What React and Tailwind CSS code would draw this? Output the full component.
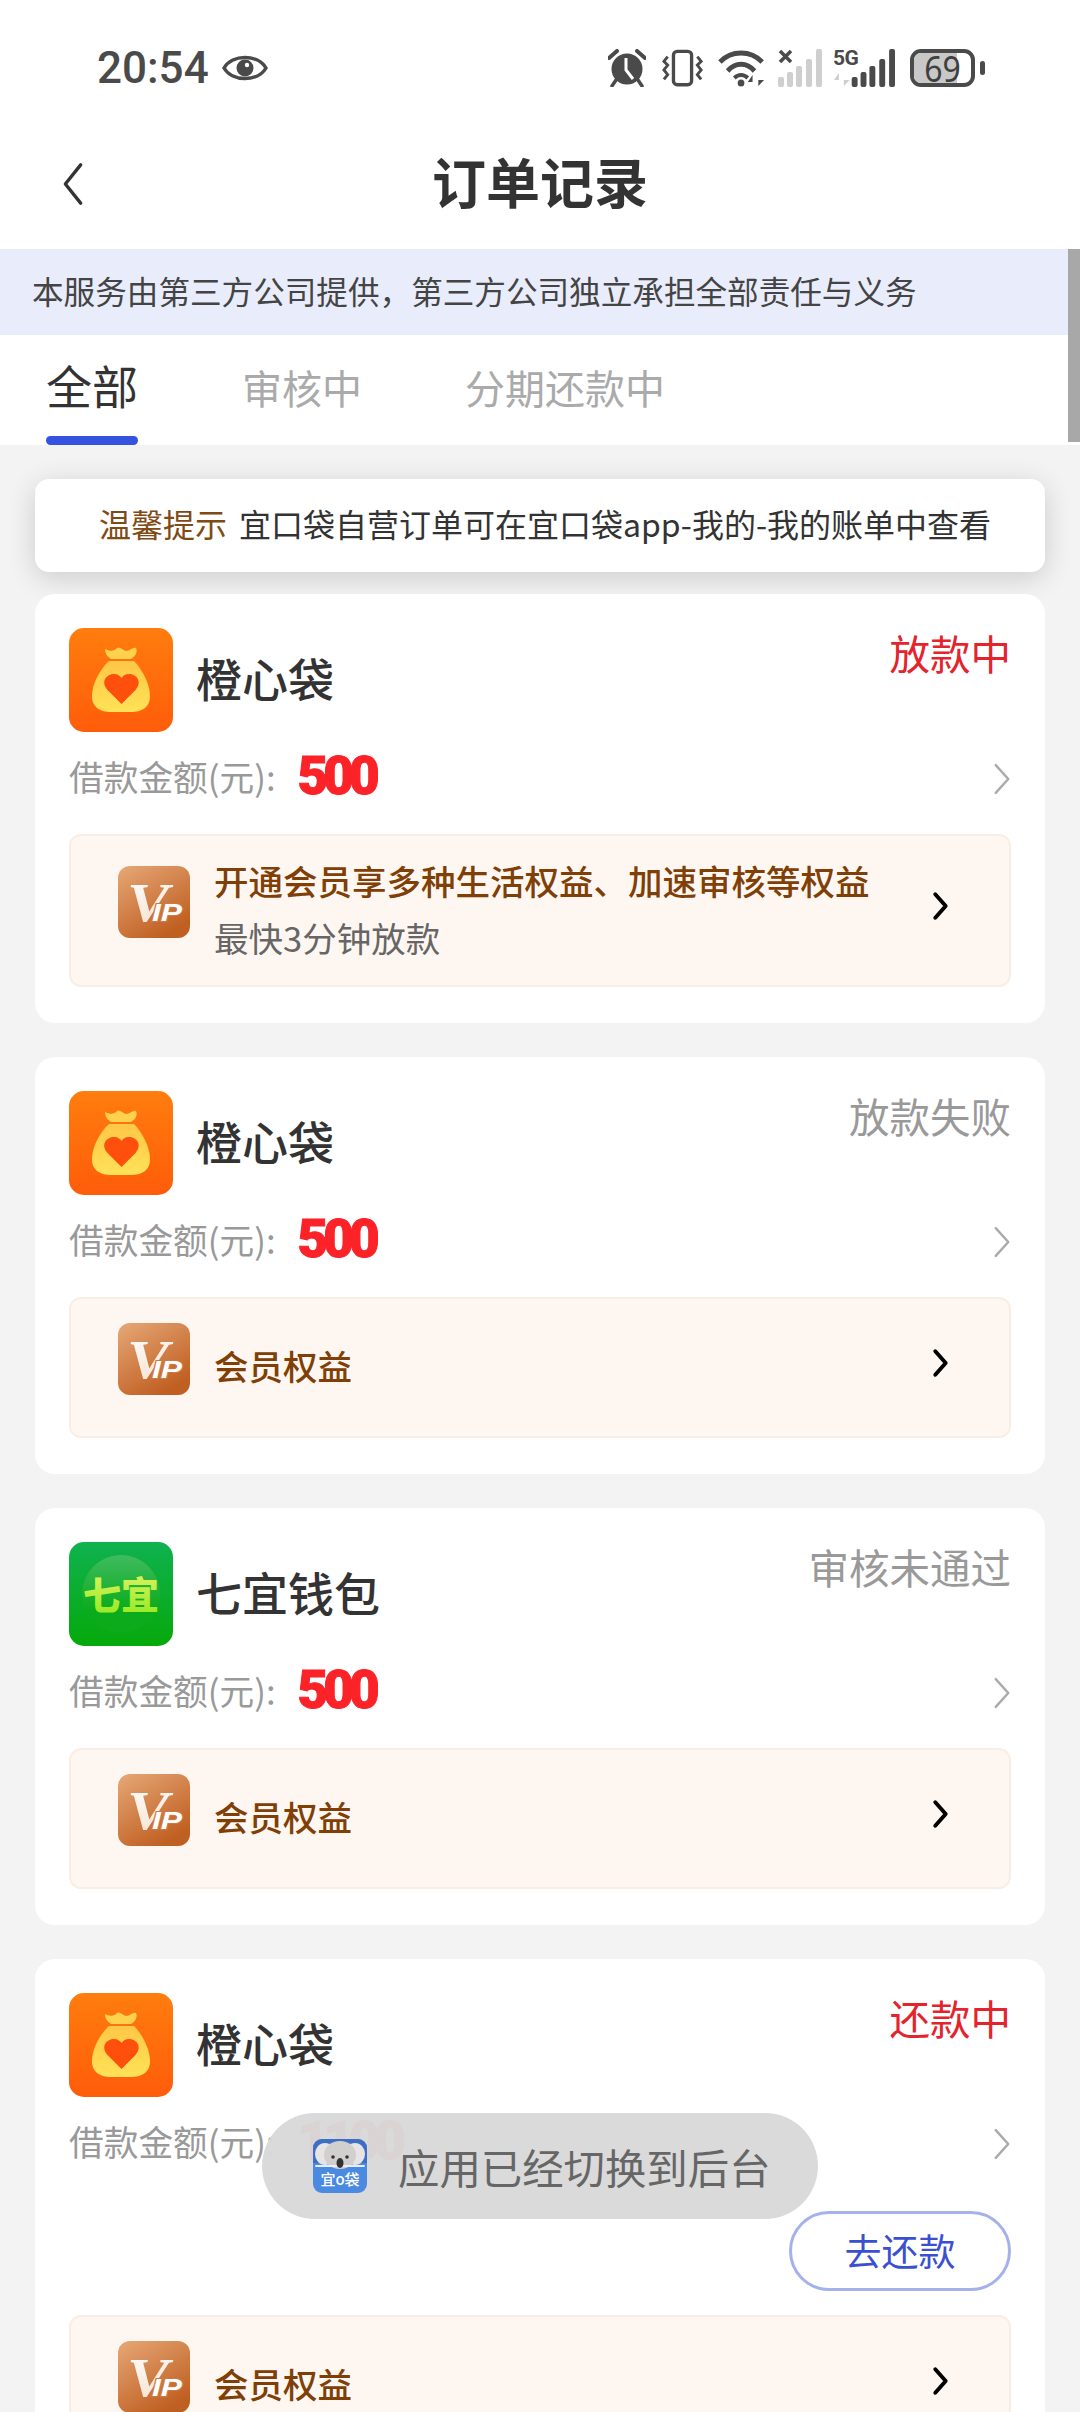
import React from "react";

const Chevron = ({ className, stroke = "#333", w = 3, d = "M20 3 L4 23 L20 43" }) => (
  <svg viewBox="0 0 24 46" className={className} fill="none">
    <path d={d} stroke={stroke} strokeWidth={w} strokeLinecap="round" strokeLinejoin="round" />
  </svg>
);

const BagLogo = () => (
  <svg viewBox="0 0 104 104" className="w-[104px] h-[104px] shrink-0">
    <defs>
      <linearGradient id="bagbg" x1="0" y1="0" x2="0" y2="1">
        <stop offset="0" stopColor="#ff7d0e" />
        <stop offset="1" stopColor="#ff5c0a" />
      </linearGradient>
      <linearGradient id="bagf" x1="0" y1="0" x2="0" y2="1">
        <stop offset="0" stopColor="#ffc745" />
        <stop offset="1" stopColor="#ffe257" />
      </linearGradient>
    </defs>
    <rect width="104" height="104" rx="15" fill="url(#bagbg)" />
    <path d="M36 21 C42 24 45 23 48 20 C50 18 54 22 57 23 C61 23 64 19 67 20 C69 24 66 29 62 31 H42 C39 29 36 26 36 21Z" fill="#ffd24e" />
    <path d="M40 33 H65 C73 41 81 56 81 68 C81 80 72 84 62 84 H42 C32 84 23 80 23 68 C23 56 31 41 40 33Z" fill="url(#bagf)" />
    <path d="M52.5 76 L38.5 62 C31 53 38 46 45 46 C49 46 51 48 52.5 50 C54 48 56 46 60 46 C67 46 74 53 66.5 62 Z" fill="#ff4f0c" />
  </svg>
);

const QiyiLogo = () => (
  <svg viewBox="0 0 104 104" className="w-[104px] h-[104px] shrink-0">
    <defs>
      <linearGradient id="qbg" x1="0" y1="0" x2="0" y2="1">
        <stop offset="0" stopColor="#0fb24f" />
        <stop offset="1" stopColor="#06a90a" />
      </linearGradient>
      <linearGradient id="qglow" x1="0" y1="0" x2="0" y2="1">
        <stop offset="0" stopColor="#3fbb60" />
        <stop offset="0.7" stopColor="#0cab1c" />
      </linearGradient>
      <linearGradient id="qt" x1="0" y1="0" x2="0" y2="1">
        <stop offset="0" stopColor="#e6f56a" />
        <stop offset="1" stopColor="#8fe81c" />
      </linearGradient>
    </defs>
    <rect width="104" height="104" rx="15" fill="url(#qbg)" />
    <circle cx="52" cy="52" r="39" fill="url(#qglow)" />
    <text x="52" y="67" textAnchor="middle" fontSize="38" fontWeight="900" fill="url(#qt)" fontFamily="'Noto Sans CJK SC',sans-serif">七宜</text>
  </svg>
);

const VipLogo = () => (
  <svg viewBox="0 0 72 72" className="w-[72px] h-[72px] shrink-0 mb-[17px]">
    <defs>
      <linearGradient id="vbg" x1="0" y1="0" x2="0.6" y2="1">
        <stop offset="0" stopColor="#e6a877" />
        <stop offset="1" stopColor="#c05f22" />
      </linearGradient>
      <linearGradient id="vt" x1="0" y1="0" x2="0.3" y2="1">
        <stop offset="0" stopColor="#ffffff" />
        <stop offset="1" stopColor="#f6e2d0" />
      </linearGradient>
    </defs>
    <rect width="72" height="72" rx="12" fill="url(#vbg)" />
    <text x="9" y="55" fontSize="54" fontWeight="900" fontStyle="italic" fill="url(#vt)" fontFamily="'Liberation Serif',serif" textLength="42" lengthAdjust="spacingAndGlyphs">V</text>
    <text x="34" y="55" fontSize="23" fontWeight="700" fontStyle="italic" fill="#fff" stroke="#cf7a40" strokeWidth="2" paintOrder="stroke" fontFamily="'Liberation Sans',sans-serif" textLength="30" lengthAdjust="spacingAndGlyphs">IP</text>
  </svg>
);

const KoalaLogo = () => (
  <svg viewBox="0 0 54 54" className="w-[54px] h-[54px] shrink-0">
    <rect width="54" height="54" rx="9" fill="#4a8ae0" />
    <path d="M0 9 a9 9 0 0 1 9 -9 H45 a9 9 0 0 1 9 9 V24 H0Z" fill="#3f6fc4" />
    <ellipse cx="12" cy="15" rx="10" ry="11" fill="#e6e4e4" />
    <ellipse cx="42" cy="15" rx="10" ry="11" fill="#e6e4e4" />
    <ellipse cx="27" cy="16" rx="16" ry="14" fill="#d2cfcf" />
    <rect x="2" y="26" width="50" height="2" rx="1" fill="#e8eef8" />
    <circle cx="20" cy="18" r="1.8" fill="#333" />
    <circle cx="34" cy="18" r="1.8" fill="#333" />
    <ellipse cx="27" cy="24" rx="3.5" ry="5" fill="#333" />
    <text x="27" y="46" textAnchor="middle" fontSize="15" fill="#fff" fontWeight="500" fontFamily="'Noto Sans CJK SC',sans-serif">宜o袋</text>
  </svg>
);

const StatusIcons = () => (
  <div className="flex items-center ml-auto h-[40px] text-[#4a4a4a]">
    <svg viewBox="0 0 38 38" className="w-[38px] h-[38px]">
      <path d="M1 9 L9 2 M37 9 L29 2" stroke="#4a4a4a" strokeWidth="4" strokeLinecap="round" />
      <path d="M8 31 L4 37 M30 31 L34 37" stroke="#4a4a4a" strokeWidth="3.5" strokeLinecap="round" />
      <circle cx="19" cy="20" r="15.5" fill="#4a4a4a" />
      <path d="M18 9 V21 L25 30" stroke="#fff" strokeWidth="3" fill="none" />
    </svg>
    <svg viewBox="0 0 44 38" className="w-[42px] h-[38px] ml-[16px]">
      <rect x="12" y="1.5" width="19" height="35" rx="4" fill="none" stroke="#4a4a4a" strokeWidth="3.5" />
      <path d="M6 7 L2 12 L6 16 L2 21 L6 26 L2 31 M37 7 L41 12 L37 16 L41 21 L37 26 L41 31" fill="none" stroke="#4a4a4a" strokeWidth="3" />
    </svg>
    <svg viewBox="0 0 50 38" preserveAspectRatio="none" className="w-[48px] h-[38px] ml-[14px]">
      <path d="M2 13 C14 1 34 1 46 13" fill="none" stroke="#4a4a4a" strokeWidth="5" />
      <path d="M10 22 C18 13 30 13 38 22" fill="none" stroke="#4a4a4a" strokeWidth="5" />
      <path d="M17 29 C21 25 27 25 31 29" fill="none" stroke="#4a4a4a" strokeWidth="4" />
      <circle cx="24" cy="34" r="3.5" fill="#4a4a4a" />
      <path d="M36 26 L31 33 H36 V38 Z M42 25 V37 L48 31 H42Z" fill="#4a4a4a" />
    </svg>
    <svg viewBox="0 0 44 38" className="w-[44px] h-[38px] ml-[12px]">
      <path d="M2 2 L13 13 M13 2 L2 13" stroke="#4a4a4a" strokeWidth="3.5" />
      <g fill="#cfcfcf">
        <rect x="0" y="28" width="6" height="10" rx="2" />
        <rect x="9" y="23" width="6" height="15" rx="2" />
        <rect x="18" y="17" width="6" height="21" rx="2" />
        <rect x="28" y="10" width="6" height="28" rx="2" />
        <rect x="38" y="0" width="6" height="38" rx="2" />
      </g>
    </svg>
    <div className="relative w-[62px] h-[38px] ml-[11px]">
      <span className="absolute left-0 top-[-2px] text-[21px] leading-[22px] font-bold font-['Roboto',sans-serif] text-[#4a4a4a] tracking-[-0.5px]">5G</span>
      <svg viewBox="0 0 63 38" preserveAspectRatio="none" className="w-[62px] h-[38px]">
        <path d="M6 24 L1 31 H6 V38 Z M11 23 V37 L17 31 H11Z" fill="#cfcfcf" />
        <g fill="#4a4a4a">
          <rect x="19" y="28" width="6" height="10" rx="2" />
          <rect x="28" y="23" width="6" height="15" rx="2" />
          <rect x="37" y="17" width="6" height="21" rx="2" />
          <rect x="47" y="10" width="6" height="28" rx="2" />
          <rect x="57" y="0" width="6" height="38" rx="2" />
        </g>
      </svg>
    </div>
    <div className="relative w-[65px] h-[38px] ml-[15px] rounded-[11px] border-[4px] border-[#4a4a4a] flex items-center justify-center">
      <div className="absolute left-0 top-0 bottom-0 w-[43px] rounded-l-[7px] bg-[#c8c8c8]" />
      <span className="relative text-[32px] leading-[30px] font-['Noto_Sans',sans-serif] text-[#3f3f3f] scale-y-[1.15]">69</span>
    </div>
    <div className="w-[5px] h-[14px] ml-[5px] rounded-full bg-[#4a4a4a]" />
  </div>
);

const Card = ({ logo, name, status, statusColor, amount, action, children }) => (
  <div className="bg-white rounded-[20px] px-[34px] pt-[34px] pb-[36px]">
    <div className="flex justify-between items-start">
      <div className="flex items-center gap-[23px]">
        {logo}
        <span className="text-[46px] leading-[60px] -mt-[7px] text-[#333] font-medium">{name}</span>
      </div>
      <span className={`text-[40.5px] leading-[52px] -mt-[1px] ${statusColor}`}>{status}</span>
    </div>
    <div className="flex items-center justify-between h-[94px] mb-[8px]">
      <div className="flex items-center">
        <span className="text-[34.7px] -mt-[5px] text-[#999]">借款金额(元):</span>
        <span className="ml-[22px] -mt-[6px] text-[53px] leading-[60px] font-black text-[#fb2228] font-['Roboto',sans-serif] tracking-[-5px] [-webkit-text-stroke:1px_#fb2228]">{amount}</span>
      </div>
      <Chevron className="w-[18px] h-[32px]" stroke="#aaa" w={3.5} d="M3 3 L21 23 L3 43" />
    </div>
    {action}
    {children}
  </div>
);

const VipBox = ({ title, sub }) => (
  <div className={`flex items-center justify-between bg-[#fef7f1] border-2 border-[#f9eee5] rounded-[12px] pl-[47px] pr-[60px] ${sub ? "h-[153px]" : "h-[141px]"}`}>
    <div className="flex items-center gap-[24px]">
      <VipLogo />
      <div className="flex flex-col -mt-[4px]">
        <span className="text-[34.5px] leading-[57px] font-medium text-[#7f3f07]">{title}</span>
        {sub && <span className="text-[34.5px] leading-[57px] text-[#666]">{sub}</span>}
      </div>
    </div>
    <Chevron className="w-[17px] h-[30px] mb-[10px]" stroke="#000" w={6} d="M4 5 L20 23 L4 41" />
  </div>
);

export default function App() {
  return (
    <div className="relative w-[1080px] h-[2412px] overflow-hidden bg-[#f3f3f3] font-['Noto_Sans_CJK_SC','Noto_Sans',sans-serif]">
      <div className="bg-white pb-[17px]">
        <div className="flex items-center h-[136px] pl-[97px] pr-[95px]">
          <span className="text-[44px] leading-[50px] font-medium text-[#4a4a4a] font-['Roboto',sans-serif]">20:54</span>
          <svg viewBox="0 0 46 28" className="w-[46px] h-[28px] ml-[13px]">
            <path d="M2 14 C10 0 36 0 44 14 C36 28 10 28 2 14Z" fill="none" stroke="#4a4a4a" strokeWidth="3.5" />
            <circle cx="23" cy="14" r="8.5" fill="#4a4a4a" />
            <circle cx="25" cy="11" r="2.2" fill="#fff" />
          </svg>
          <StatusIcons />
        </div>
        <div className="relative flex items-center justify-center h-[96px]">
          <Chevron className="absolute left-[60px] top-[26px] w-[26px] h-[44px]" stroke="#333" w={3.5} />
          <span className="text-[54px] leading-[70px] -mt-[6px] font-bold text-[#333]">订单记录</span>
        </div>
      </div>
      <div className="flex items-center h-[86px] bg-[#e9edfb] pl-[32px] text-[31.6px] text-[#444]">
        <span className="-mt-[2px]">本服务由第三方公司提供，第三方公司独立承担全部责任与义务</span>
      </div>
      <div className="relative flex items-start h-[110px] bg-white">
        <div className="relative ml-[46px] w-[92px] h-[110px]">
          <span className="block text-[46px] leading-[60px] mt-[19px] text-[#333]">全部</span>
          <div className="absolute left-0 bottom-0 w-[92px] h-[9px] rounded-full bg-[#3552e0]" />
        </div>
        <span className="ml-[104px] mt-[22px] text-[40px] leading-[60px] text-[#aaa]">审核中</span>
        <span className="ml-[103px] mt-[22px] text-[40px] leading-[60px] text-[#aaa]">分期还款中</span>
      </div>

      <div className="px-[35px] pt-[34px]">
        <div className="flex items-center justify-center h-[93px] pl-[10px] bg-white rounded-[14px] shadow-[0_6px_28px_rgba(0,0,0,0.16)] text-[32px]">
          <span className="text-[#7f4a14] mr-[12px] -mt-[5px]">温馨提示</span>
          <span className="text-[#333] -mt-[5px]">宜口袋自营订单可在宜口袋app-我的-我的账单中查看</span>
        </div>
        <div className="flex flex-col gap-[34px] mt-[22px]">
          <Card logo={<BagLogo />} name="橙心袋" status="放款中" statusColor="text-[#e4242c]" amount="500">
            <VipBox title="开通会员享多种生活权益、加速审核等权益" sub="最快3分钟放款" />
          </Card>
          <Card logo={<BagLogo />} name="橙心袋" status="放款失败" statusColor="text-[#999]" amount="500">
            <VipBox title="会员权益" />
          </Card>
          <Card logo={<QiyiLogo />} name="七宜钱包" status="审核未通过" statusColor="text-[#999]" amount="500">
            <VipBox title="会员权益" />
          </Card>
          <Card
            logo={<BagLogo />}
            name="橙心袋"
            status="还款中"
            statusColor="text-[#e4242c]"
            amount="1100"
            action={
              <div className="flex justify-end mt-[20px] mb-[24px]">
                <div className="flex items-center justify-center w-[222px] h-[80px] rounded-full border-[3px] border-[#a5b2ea] text-[37px] text-[#3b50d0]">
                  去还款
                </div>
              </div>
            }
          >
            <VipBox title="会员权益" />
          </Card>
        </div>
      </div>

      <div className="absolute left-[262px] top-[2113px] w-[556px] h-[106px] rounded-full bg-[#d9d9d9]/[0.97] flex items-center pl-[51px]">
        <KoalaLogo />
        <span className="ml-[31px] text-[41.4px] text-[#666]">应用已经切换到后台</span>
      </div>
      <div className="absolute right-0 top-[249px] w-[12px] h-[193px] bg-[#a8a8a8]" />
    </div>
  );
}
